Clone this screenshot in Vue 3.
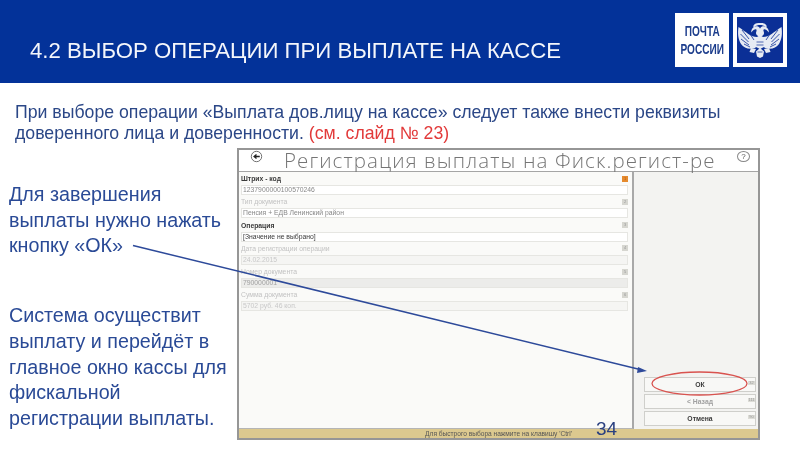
<script setup>
const fields = [
  { label: 'Штрих - код', value: '1237900000100570246', key: '1', strong: true, kind: 'white', active: true },
  { label: 'Тип документа', value: 'Пенсия + ЕДВ  Ленинский район', key: '2', kind: 'white' },
  { label: 'Операция', value: '[Значение не выбрано]', key: '3', strong: true, kind: 'white', dark: true },
  { label: 'Дата регистрации операции', value: '24.02.2015', key: '4', kind: 'pale' },
  { label: 'Номер документа', value: '790000001', key: '5', kind: 'grey' },
  { label: 'Сумма документа', value: '5702 руб. 46 коп.', key: '6', kind: 'pale' },
]
const buttons = [
  { label: 'ОК', key: '32' },
  { label: '< Назад', key: '111', faint: true },
  { label: 'Отмена', key: '90' },
]
</script>

<template>
  <div class="slide">
    <header class="top">
      <h1 class="title">4.2 ВЫБОР ОПЕРАЦИИ ПРИ ВЫПЛАТЕ НА КАССЕ</h1>
      <div class="logos">
        <div class="logo-word"><span class="logo-text">ПОЧТА<br />РОССИИ</span></div>
        <div class="logo-mark">
          <svg viewBox="0 0 46 46" width="46" height="46">
            <defs>
              <filter id="eagleSoft" x="-5%" y="-5%" width="110%" height="110%">
                <feGaussianBlur stdDeviation="0.35" />
              </filter>
              <g id="eagleHalf">
                <path fill="#e6eaf3" d="M20 20C14 20 9 15 1.500 10 .6 16 1 22 4 27c3 4 8 6 14 4l3-3z" />
                <path fill="none" stroke="#0b2f96" stroke-width="0.8" d="M5 13l7 9M3.500 17l8 8M4 22l8 6M7 27l6 3M13 17l4 6" />
                <path fill="#e6eaf3" d="M23 19h-2c-2-1-2.500-3-1.500-5 .5-2-1-2.500-3-1l-2.500 2.500.5-2.500c1-3 4-4.500 6.500-3.500 2.500 1 2.500 4 2 6z" />
                <path fill="#e6eaf3" d="M16 9.500c1-3 4-4 7-3.500v2c-2 0-4 .5-5.500 2z" />
                <path fill="#e6eaf3" d="M23 18v14l-4-2-1-6 2-4zM23 31v10l-3-1.500-1-5zM14 31l5 1-2 4-4.500-1z" />
                <path fill="none" stroke="#0b2f96" stroke-width="0.7" d="M19.500 25H23M19.500 28H23M20.500 35H23" />
              </g>
            </defs>
            <rect width="46" height="46" fill="#0b2f96" />
            <g filter="url(#eagleSoft)">
              <use href="#eagleHalf" />
              <use href="#eagleHalf" transform="matrix(-1 0 0 1 46 0)" />
            </g>
          </svg>
        </div>
      </div>
    </header>

    <p class="intro">
      При выборе операции «Выплата дов.лицу на кассе» следует также внести реквизиты доверенного лица и доверенности.
      <span class="ref">(см. слайд № 23)</span>
    </p>

    <main class="content">
      <div class="notes">
        <p class="note">Для завершения<br />выплаты нужно нажать<br />кнопку «ОК»</p>
        <p class="note">Система осуществит<br />выплату и перейдёт в<br />главное окно кассы для<br />фискальной<br />регистрации выплаты.</p>
      </div>

      <section class="window">
        <div class="win-head">
          <svg class="back" viewBox="0 0 14 14" width="13" height="13">
            <circle cx="7" cy="7" r="5.6" fill="none" stroke="#555" stroke-width="0.9" />
            <path d="M10.500 7H5M7 4.800L4.400 7 7 9.200" fill="none" stroke="#222" stroke-width="1.400" />
          </svg>
          <span class="win-title">Регистрация выплаты на Фиск.регист-ре</span>
          <span class="help">?</span>
        </div>
        <div class="win-body">
          <div class="form">
            <div v-for="f in fields" :key="f.key" class="field">
              <div class="field-top">
                <span class="field-label" :class="{ strong: f.strong }">{{ f.label }}</span>
                <span class="hot" :class="{ active: f.active }">{{ f.key }}</span>
              </div>
              <div class="input" :class="[f.kind, { dark: f.dark }]">{{ f.value }}</div>
            </div>
          </div>
          <div class="actions">
            <button v-for="b in buttons" :key="b.label" class="act" :class="{ faint: b.faint }">
              {{ b.label }}<span class="act-key">{{ b.key }}</span>
            </button>
          </div>
        </div>
        <div class="status">Для быстрого выбора нажмите на клавишу 'Ctrl'</div>
      </section>
    </main>

    <svg class="overlay" viewBox="0 0 800 450" width="800" height="450">
      <defs>
        <filter id="soft" x="-5%" y="-5%" width="110%" height="110%">
          <feGaussianBlur stdDeviation="0.45" />
        </filter>
      </defs>
      <g filter="url(#soft)">
        <path d="M133 245.500L640 369.500" stroke="#2d4a9a" stroke-width="1.500" fill="none" />
        <path d="M647 371l-9-4-1 6z" fill="#2d4a9a" />
        <ellipse cx="699.500" cy="383.500" rx="47.500" ry="11.500" fill="none" stroke="#d9534f" stroke-width="1.300" />
      </g>
    </svg>
    <span class="page-no">34</span>
  </div>
</template>

<style>
html, body { margin: 0; background: #fff; }
</style>

<style scoped>
.slide {
  position: relative;
  width: 800px;
  height: 450px;
  overflow: hidden;
  background: #fff;
  font-family: "Liberation Sans", Arial, sans-serif;
}
.top {
  height: 83px;
  background: #033299;
  display: flex;
  align-items: center;
  justify-content: space-between;
  padding: 0 13px 0 30px;
  box-sizing: border-box;
}
.title {
  margin: 18px 0 0;
  font-size: 22.2px;
  font-weight: 400;
  color: #f4f6fb;
  white-space: nowrap;
  filter: blur(0.3px);
}
.logos { display: flex; gap: 4px; margin-top: -3px; }
.logo-word {
  width: 54px;
  height: 54px;
  background: #fff;
  display: flex;
  align-items: center;
  justify-content: center;
}
.logo-text {
  display: block;
  flex: none;
  color: #1c3d8c;
  font: 700 14px/18px "Liberation Sans", sans-serif;
  text-align: center;
  white-space: nowrap;
  transform: scaleX(0.72);
  filter: blur(0.3px);
}
.logo-mark {
  width: 54px;
  height: 54px;
  background: #fff;
  display: flex;
  align-items: center;
  justify-content: center;
}
.intro {
  margin: 18.500px 40px 0 15px;
  font-size: 17.7px;
  line-height: 21px;
  color: #2b4787;
  filter: blur(0.3px);
}
.ref { color: #e23a3a; }
.content {
  display: flex;
  margin-top: 4.500px;
  padding-left: 9px;
}
.notes { width: 228px; padding-top: 34px; }
.note {
  margin: 0 0 44px;
  font-size: 19.7px;
  line-height: 25.7px;
  color: #2a4a96;
  white-space: nowrap;
  filter: blur(0.3px);
}
.window {
  width: 523px;
  height: 292px;
  box-sizing: border-box;
  border: 2px solid #969696;
  background: #f3f3f1;
  display: flex;
  flex-direction: column;
  filter: blur(0.5px);
}
.win-head {
  height: 22px;
  flex: none;
  box-sizing: border-box;
  background: #fff;
  display: flex;
  align-items: center;
  border-bottom: 1px solid #a5a5a5;
  padding-left: 11px;
}
.back { flex: none; margin-top: -8px; }
.win-title {
  margin-left: 21px;
  margin-top: -2px;
  font: 300 20.5px "Open Sans", sans-serif;
  color: #757575;
  white-space: nowrap;
  letter-spacing: 1.1px;
}
.help {
  margin-left: auto;
  margin-right: 8px;
  margin-top: -8px;
  width: 11px;
  height: 9px;
  border: 1px solid #888;
  border-radius: 50%;
  font: 8px/9px "Liberation Sans", sans-serif;
  color: #555;
  text-align: center;
}
.win-body { flex: 1; display: flex; min-height: 0; }
.form {
  width: 395px;
  flex: none;
  background: #fafaf8;
  border-right: 2px solid #a8a8a8;
  border-bottom: 1px solid #b5b5b5;
  box-sizing: border-box;
  padding: 0 4px 0 2px;
}
.field { height: 23.3px; }
.field-top {
  height: 13px;
  display: flex;
  align-items: center;
  justify-content: space-between;
}
.field-label { font-size: 6.8px; color: #c2c2c2; }
.field-label.strong { color: #3a3a3a; font-weight: 700; }
.hot {
  width: 6px;
  height: 6px;
  background: #d6d6d0;
  color: #999;
  font-size: 4px;
  line-height: 6px;
  text-align: center;
}
.hot.active { background: #e58a2e; color: #b25c10; }
.input {
  height: 8px;
  font-size: 6.8px;
  line-height: 8px;
  padding-left: 1px;
  border: 1px solid #e6e6e2;
  color: #aaa;
}
.input.white { background: #fff; color: #888; }
.input.dark { color: #3a3a3a; }
.input.pale { background: #f5f5f3; color: #c8c8c8; }
.input.grey { background: #ececea; color: #a0a0a0; }
.actions {
  flex: 1;
  display: flex;
  flex-direction: column;
  justify-content: flex-end;
  gap: 2px;
  padding: 0 2px 3px 10px;
}
.act {
  position: relative;
  height: 15px;
  padding: 0;
  border: 1px solid #cfcfcb;
  background: #f8f8f6;
  font: 700 6.8px "Liberation Sans", sans-serif;
  color: #3a3a3a;
}
.act.faint { color: #a0a0a0; }
.act-key {
  position: absolute;
  right: 0;
  top: 3px;
  width: 7px;
  height: 4px;
  background: #dcdcd6;
  color: #999;
  font-size: 4px;
  line-height: 4px;
  font-weight: 400;
}
.status {
  height: 9px;
  flex: none;
  background: #dcc98f;
  font-size: 6.6px;
  line-height: 9px;
  color: #555;
  text-align: center;
}
.overlay { position: absolute; left: 0; top: 0; pointer-events: none; }
.page-no {
  position: absolute;
  left: 596px;
  top: 418px;
  font-size: 19px;
  line-height: 22px;
  color: #2a4080;
  filter: blur(0.3px);
}
</style>
